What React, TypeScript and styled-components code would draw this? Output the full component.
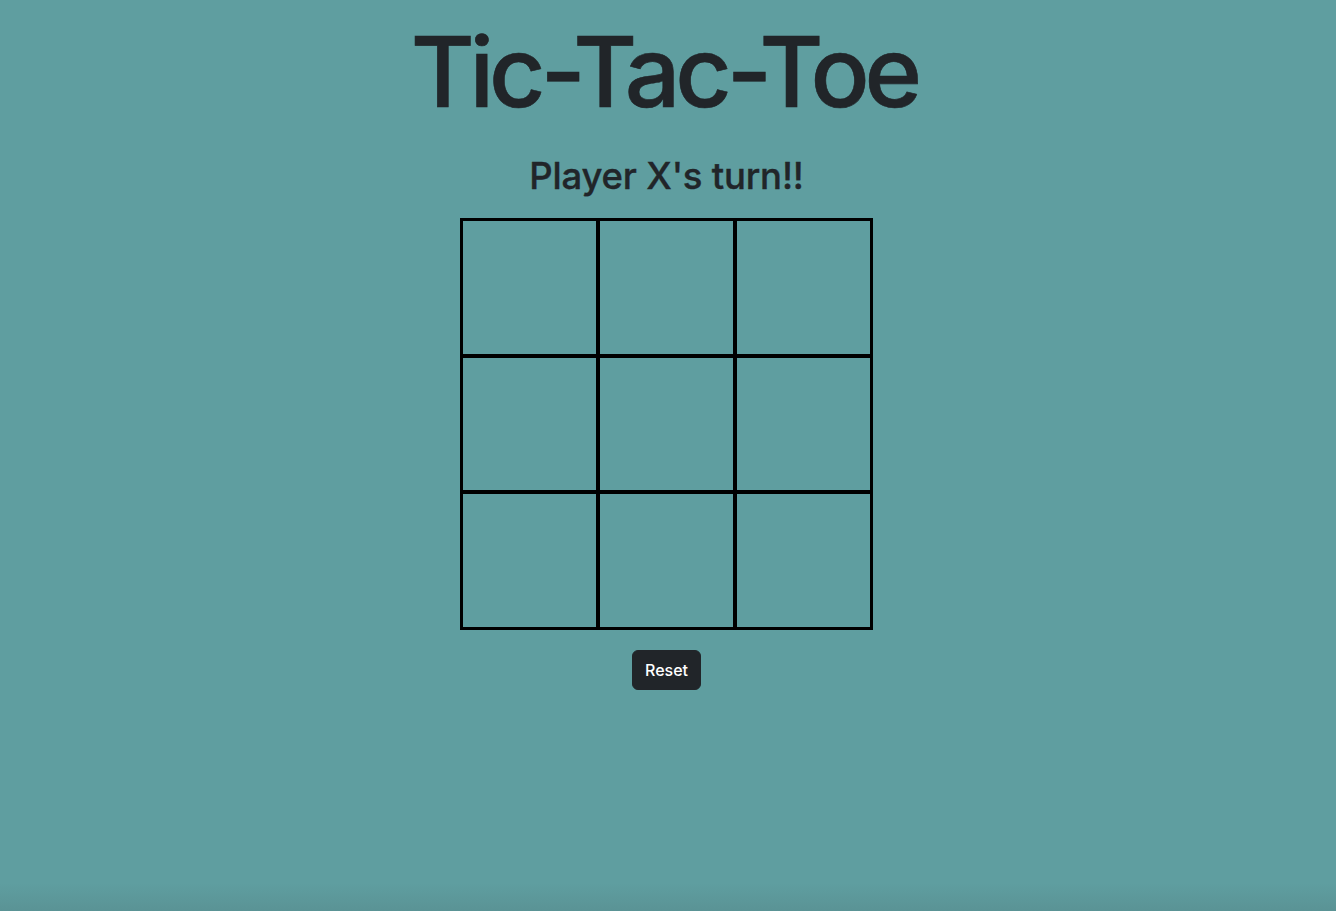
import React, { useState } from "react";
import styled, { createGlobalStyle } from "styled-components";

const GlobalStyle = createGlobalStyle`
  html, body {
    margin: 0;
    padding: 0;
  }
  body {
    min-height: 100vh;
    background: linear-gradient(to bottom, #5f9ea0 calc(100% - 28px), #5a9395 100%);
    font-family: Inter, "Noto Sans", "Liberation Sans", sans-serif;
    color: #212529;
  }
`;

const Page = styled("div")`
  display: flex;
  flex-direction: column;
  align-items: center;
  padding: 13px 3px 0 0;
`;

const Title = styled("h1")`
  margin: 0 0 0 -5.2px;
  font-size: 98px;
  font-weight: 500;
  line-height: 1.2;
  letter-spacing: -5.2px;
  -webkit-text-stroke: 0.6px currentColor;
`;

const Status = styled("h2")`
  margin: 24px 0 0;
  font-size: 36.5px;
  font-weight: 500;
  line-height: 1.2;
  letter-spacing: -0.2px;
  -webkit-text-stroke: 0.35px currentColor;
`;

const Board = styled("div")`
  margin-top: 20px;
  display: grid;
  grid-template-columns: repeat(3, 136.7px);
  grid-template-rows: repeat(3, 136.5px);
  border: 1px solid #000;
`;

const Cell = styled("button")`
  box-sizing: border-box;
  border: 2px solid #000;
  background: transparent;
  padding: 0;
  font-family: inherit;
  font-size: 80px;
  font-weight: 500;
  color: #212529;
  cursor: pointer;
`;

const ResetButton = styled("button")`
  margin-top: 20px;
  height: 40px;
  padding: 0 12px;
  border: 1px solid #212529;
  border-radius: 6px;
  background: #212529;
  color: #fff;
  font-family: inherit;
  font-size: 16px;
  font-weight: 500;
  cursor: pointer;
`;

type Mark = "X" | "O" | null;

const App = () => {
  const [cells, setCells] = useState<Mark[]>(Array(9).fill(null));
  const [player, setPlayer] = useState<"X" | "O">("X");

  function play(index: number) {
    if (cells[index]) {
      return;
    }
    const next = cells.slice();
    next[index] = player;
    setCells(next);
    setPlayer(player === "X" ? "O" : "X");
  }

  function reset() {
    setCells(Array(9).fill(null));
    setPlayer("X");
  }

  return (
    <>
      <GlobalStyle />
      <Page>
        <Title>Tic-Tac-Toe</Title>
        <Status>Player {player}'s turn!!</Status>
        <Board>
          {cells.map((cell, index) => (
            <Cell key={index} onClick={() => play(index)}>
              {cell}
            </Cell>
          ))}
        </Board>
        <ResetButton onClick={reset}>Reset</ResetButton>
      </Page>
    </>
  );
};

export default App;
